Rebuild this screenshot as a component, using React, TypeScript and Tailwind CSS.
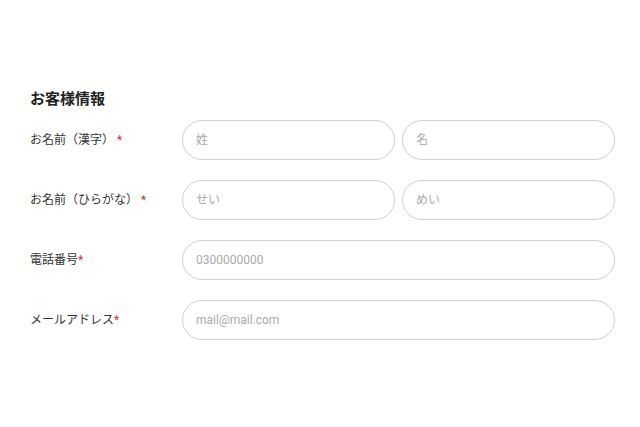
const font = { fontFamily: 'Roboto, "Noto Sans CJK JP", sans-serif' };

function Label({ text }: { text: string }) {
  return (
    <div className="w-[152px] shrink-0 text-[12px] text-[#333]">
      {text}
      <span className="text-[#c0392b]">*</span>
    </div>
  );
}

function Field({ placeholder }: { placeholder: string }) {
  return (
    <input
      type="text"
      placeholder={placeholder}
      className="h-10 w-full min-w-0 rounded-full border border-[#cfcfcf] bg-white px-[13px] text-[12px] text-[#333] outline-none placeholder:text-[#aaa]"
    />
  );
}

export default function App() {
  return (
    <div
      className="min-h-[427px] w-full bg-white pt-[87px] pl-[30px] pr-[25px]"
      style={{ fontFamily: '"Noto Sans CJK JP", Roboto, sans-serif' }}
    >
      <h2 className="mb-[11px] text-[15px] leading-[22px] font-bold text-[#222]">お客様情報</h2>
      <div className="flex flex-col gap-5" style={font}>
        <div className="flex items-center">
          <Label text="お名前（漢字） " />
          <div className="flex flex-1 gap-[7px]">
            <Field placeholder="姓" />
            <Field placeholder="名" />
          </div>
        </div>
        <div className="flex items-center">
          <Label text="お名前（ひらがな） " />
          <div className="flex flex-1 gap-[7px]">
            <Field placeholder="せい" />
            <Field placeholder="めい" />
          </div>
        </div>
        <div className="flex items-center">
          <Label text="電話番号" />
          <div className="flex-1">
            <Field placeholder="0300000000" />
          </div>
        </div>
        <div className="flex items-center">
          <Label text="メールアドレス" />
          <div className="flex-1">
            <Field placeholder="mail@mail.com" />
          </div>
        </div>
      </div>
    </div>
  );
}
